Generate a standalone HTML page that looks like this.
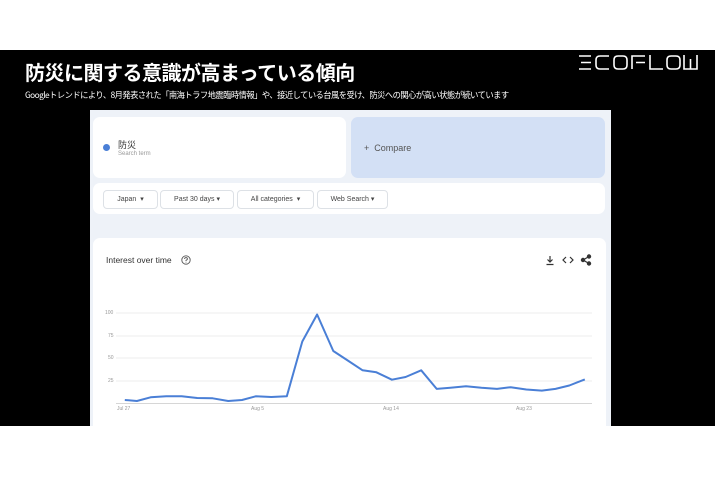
<!DOCTYPE html>
<html><head><meta charset="utf-8"><style>
body{margin:0;width:715px;height:477px;background:#fff;position:relative;overflow:hidden;font-family:"Liberation Sans","Noto Sans CJK JP",sans-serif}
.blk{position:absolute;left:0;top:50px;width:715px;height:376px;background:#000}
.t{position:absolute;left:25px;top:57px;color:#fff;font-size:20px;font-weight:bold;letter-spacing:-0.5px;font-family:"Noto Sans CJK JP",sans-serif}
.s{position:absolute;left:25px;top:89px;color:#fff;font-size:8.3px;white-space:nowrap;letter-spacing:-0.55px;font-family:"Noto Sans CJK JP",sans-serif}
.panel{position:absolute;left:90px;top:110px;width:521px;height:316px;background:#eef2f8}
.box{position:absolute;background:#fff;border-radius:7px}
.chip{position:absolute;top:190px;height:17px;border:1px solid #dde1e6;border-radius:4px;font-size:7px;color:#444;line-height:17px;text-align:center}
.lbl{position:absolute;font-size:5px;color:#999}
</style></head><body>
<div class="blk"></div>
<div class="t">防災に関する意識が高まっている傾向</div>
<div class="s">Googleトレンドにより、8月発表された「南海トラフ地震臨時情報」や、接近している台風を受け、防災への関心が高い状態が続いています</div>
<svg style="position:absolute;left:578px;top:54px" width="122" height="17" viewBox="0 0 122 17" fill="none" stroke="#fff" stroke-width="1.6">
<path d="M13 2H1M13 8.5H3M13 15H1"/>
<path d="M31 2H22Q18 2 18 6V11Q18 15 22 15H31"/>
<path d="M40 2H45Q49 2 49 6V11Q49 15 45 15H40Q36 15 36 11V6Q36 2 40 2Z"/>
<path d="M67 2H54V15M67 8.5H58"/>
<path d="M72 1V15H85"/>
<path d="M93 2H98Q102 2 102 6V11Q102 15 98 15H93Q89 15 89 11V6Q89 2 93 2Z"/>
<path d="M106 1V15H119V1M112.5 5V15"/>
</svg>
<div class="panel"></div>
<div class="box" style="left:93px;top:117px;width:253px;height:61px"></div>
<div style="position:absolute;left:103px;top:144px;width:7px;height:7px;border-radius:50%;background:#4a7fd6"></div>
<div style="position:absolute;left:118px;top:138px;font-size:9px;color:#333">防災</div>
<div style="position:absolute;left:118px;top:151px;font-size:6px;color:#999">Search term</div>
<div class="box" style="left:351px;top:117px;width:254px;height:61px;background:#d3e0f5"></div>
<div style="position:absolute;left:364px;top:143px;font-size:9px;color:#555">+ &nbsp;Compare</div>
<div class="box" style="left:93px;top:183px;width:512px;height:31px"></div>
<div class="chip" style="left:103px;width:53px">Japan &nbsp;▾</div>
<div class="chip" style="left:160px;width:72px">Past 30 days ▾</div>
<div class="chip" style="left:237px;width:75px">All categories &nbsp;▾</div>
<div class="chip" style="left:317px;width:69px">Web Search ▾</div>
<div class="box" style="left:93px;top:238px;width:513px;height:188px;border-radius:7px 7px 0 0"></div>
<div style="position:absolute;left:106px;top:255px;font-size:8.5px;color:#333">Interest over time</div>
<svg style="position:absolute;left:181px;top:255px" width="10" height="10" fill="none" stroke="#555" stroke-width="0.9"><circle cx="5" cy="5" r="4.2"/><path d="M3.6 4Q3.6 2.6 5 2.6Q6.4 2.6 6.4 3.9Q6.4 4.8 5 5.3V6.2M5 7.2V7.8"/></svg>
<svg style="position:absolute;left:544px;top:254px" width="50" height="12" fill="none" stroke="#333" stroke-width="1.2">
<path d="M6 2V8M3.5 5.5L6 8L8.5 5.5M2.5 10.5H9.5"/>
<path d="M22 3L19 6L22 9M26 3L29 6L26 9"/>
<circle cx="45" cy="2.5" r="1.6" fill="#333"/><circle cx="45" cy="9.5" r="1.6" fill="#333"/><circle cx="39" cy="6" r="1.6" fill="#333"/><path d="M45 2.5L39 6L45 9.5"/>
</svg>
<svg style="position:absolute;left:0;top:0" width="715" height="477">
<g stroke="#e6e6e6" stroke-width="0.7"><path d="M116 313H592M116 336H592M116 358H592M116 381H592"/></g>
<path d="M116 403.5H592" stroke="#c8c8c8" stroke-width="0.8"/>
<polyline fill="none" stroke="#4a7fd6" stroke-width="2" stroke-linejoin="round" points="124.8,400 136.9,401 150.6,397.3 166.2,396.3 181.7,396.3 197.2,398 212.7,398.3 228.2,401 242,400 255.7,396.3 271.3,397 286.8,396.3 302.3,341.5 317.1,314.5 333.3,351 347,360 362.6,370.3 376.4,372.3 391.9,379.7 405.6,377 421.2,370.3 436.7,388.9 450.4,387.8 466,386.2 481.5,387.8 497,388.9 510.7,387.2 526.3,389.5 541.8,390.6 555.5,388.9 569.3,385.5 584.8,379.4"/>
</svg>
<div class="lbl" style="left:105px;top:310px">100</div>
<div class="lbl" style="left:108px;top:333px">75</div>
<div class="lbl" style="left:108px;top:355px">50</div>
<div class="lbl" style="left:108px;top:378px">25</div>
<div class="lbl" style="left:117px;top:406px">Jul 27</div>
<div class="lbl" style="left:251px;top:406px">Aug 5</div>
<div class="lbl" style="left:383px;top:406px">Aug 14</div>
<div class="lbl" style="left:516px;top:406px">Aug 23</div>
</body></html>
